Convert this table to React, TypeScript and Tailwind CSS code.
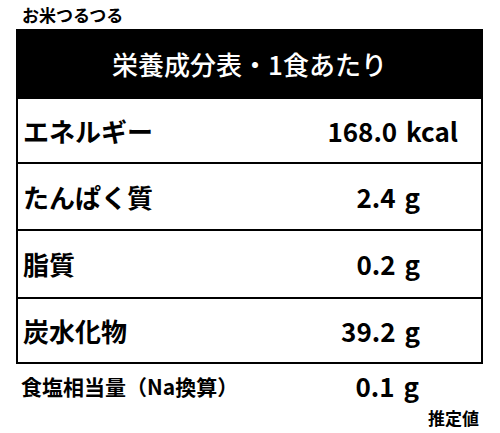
import React from 'react';

const rows = [
  { label: 'エネルギー', value: '168.0 kcal', pad: 'pr-[23px]', h: 'h-[65px]' },
  { label: 'たんぱく質', value: '2.4 g', pad: 'pr-[61px]', h: 'h-[67px]' },
  { label: '脂質', value: '0.2 g', pad: 'pr-[61px]', h: 'h-[68px]' },
  { label: '炭水化物', value: '39.2 g', pad: 'pr-[61px]', h: 'h-[65px]' },
];

const App = () => {
  return (
    <div className="w-[500px] h-[433px] bg-white text-black font-['Noto_Sans_CJK_JP',sans-serif]">
      <div className="h-[29px] pl-[22px] pt-[4px] text-[17px] font-bold leading-[22px]">お米つるつる</div>

      <div className="ml-4 w-[467px] border-2 border-black">
        <div className="h-[66px] bg-black text-white flex items-center justify-center text-[26px] font-medium leading-none">
          栄養成分表・1食あたり
        </div>
        {rows.map((r) => (
          <div key={r.label} className={`${r.h} border-t-2 border-black flex items-center justify-between pl-[5px] ${r.pad} text-[26px] font-bold leading-none`}>
            <span>{r.label}</span>
            <span className="[word-spacing:3px]">{r.value}</span>
          </div>
        ))}
      </div>

      <div className="h-[44px] flex items-center justify-between pl-[21px] pr-[81px]">
        <span className="text-[21px] font-bold leading-none">食塩相当量（Na換算）</span>
        <span className="text-[26px] font-bold leading-none [word-spacing:3px]">0.1 g</span>
      </div>
      <div className="pr-[21px] text-right text-[17px] font-bold leading-none pt-[1px]">推定値</div>
    </div>
  );
};

export default App;
